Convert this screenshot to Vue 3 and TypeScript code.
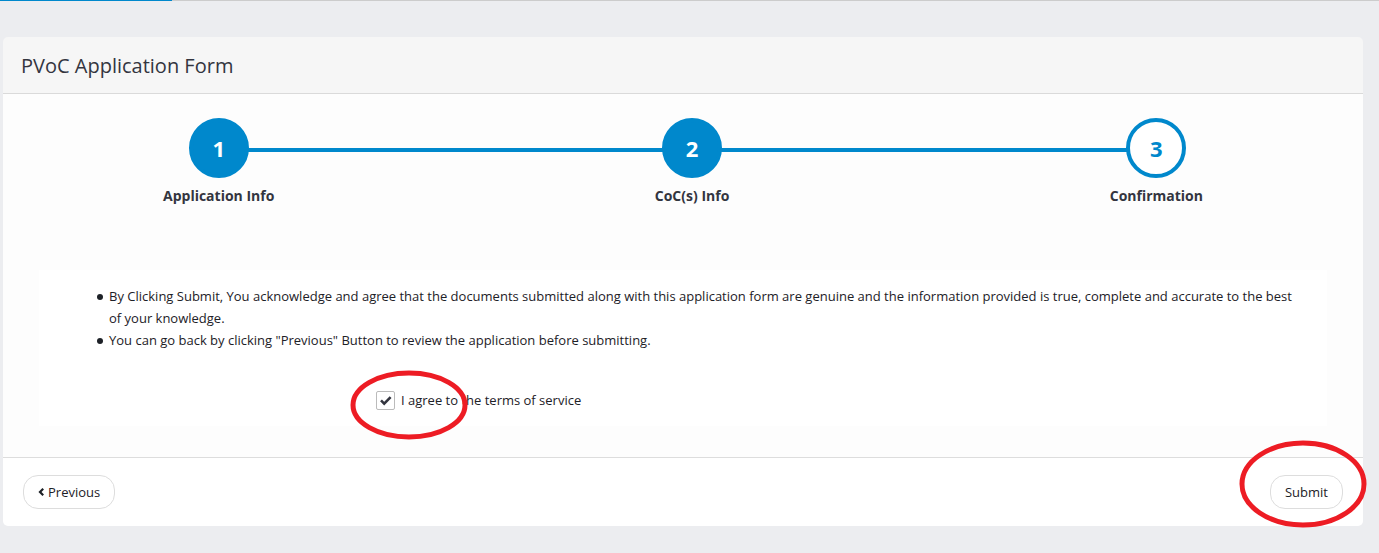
<script setup lang="ts">
import { ref } from 'vue'

interface Step {
  id: number
  label: string
  done: boolean
}

const steps: Step[] = [
  { id: 1, label: 'Application Info', done: true },
  { id: 2, label: 'CoC(s) Info', done: true },
  { id: 3, label: 'Confirmation', done: false },
]

const terms: string[] = [
  'By Clicking Submit, You acknowledge and agree that the documents submitted along with this application form are genuine and the information provided is true, complete and accurate to the best of your knowledge.',
  'You can go back by clicking "Previous" Button to review the application before submitting.',
]

const agreed = ref(true)
</script>

<template>
  <main class="page">
    <div class="rule"></div>
    <form class="panel" @submit.prevent>
      <header class="panel-header">
        <h2>PVoC Application Form</h2>
      </header>

      <div class="panel-body">
        <ol class="steps">
          <li v-for="step in steps" :key="step.id" class="step" :class="{ done: step.done }">
            <span class="circle">{{ step.id }}</span>
            <span class="label">{{ step.label }}</span>
          </li>
        </ol>

        <section class="confirm">
          <ul class="terms">
            <li v-for="term in terms" :key="term">{{ term }}</li>
          </ul>
          <div class="agree">
            <input id="agree" v-model="agreed" type="checkbox" />
            <label for="agree">I agree to the terms of service</label>
            <svg class="ring ring-agree" viewBox="0 0 118 70" aria-hidden="true">
              <ellipse cx="59" cy="35" rx="56" ry="32" />
            </svg>
          </div>
        </section>
      </div>

      <footer class="panel-footer">
        <button type="button" class="pill">
          <svg class="chevron" viewBox="0 0 6 8" aria-hidden="true">
            <path d="M5.2 0.8 2 4l3.2 3.2" />
          </svg>
          Previous
        </button>
        <div class="submit">
          <button type="submit" class="pill">Submit</button>
          <svg class="ring ring-submit" viewBox="0 0 128 88" aria-hidden="true">
            <ellipse cx="64" cy="44" rx="61" ry="41" />
          </svg>
        </div>
      </footer>
    </form>
  </main>
</template>

<style>
body {
  margin: 0;
  background: #ecedf0;
}
</style>

<style scoped>
.page {
  font-family: "Open Sans", "Noto Sans", sans-serif;
  font-size: 13px;
  line-height: 22px;
  color: #1d2127;
}

.rule {
  height: 1px;
  background: linear-gradient(#0088cc, #0088cc) 0 0 / 172px 1px no-repeat #cccccc;
}

.panel {
  margin: 36px 16px 26px 3px;
}

.panel-header {
  padding: 19px 18px 17px;
  background: #f6f6f6;
  border-bottom: 1px solid #dadada;
  border-radius: 5px 5px 0 0;
}

.panel-header h2 {
  margin: 0;
  font-size: 20px;
  line-height: 20px;
  font-weight: 400;
  color: #33353f;
}

.panel-body {
  padding: 24px 36px 31px;
  background: #fdfdfd;
}

.steps {
  position: relative;
  display: flex;
  justify-content: space-between;
  margin: 0 124px;
  padding: 0;
  list-style: none;
}

.steps::before {
  content: "";
  position: absolute;
  top: 30px;
  left: 56px;
  right: 48px;
  height: 4px;
  background: #0088cc;
}

.step {
  position: relative;
  display: flex;
  flex-direction: column;
  align-items: center;
  gap: 7px;
}

.circle {
  box-sizing: border-box;
  width: 60px;
  height: 60px;
  border: 4px solid #0088cc;
  border-radius: 50%;
  background: #ffffff;
  color: #0088cc;
  font-size: 22px;
  line-height: 53px;
  font-weight: 700;
  text-align: center;
}

.done .circle {
  background: #0088cc;
  color: #ffffff;
}

.label {
  font-size: 14px;
  font-weight: 700;
  color: #33353f;
}

.confirm {
  margin-top: 63px;
  padding: 15px 30px 15px;
  background: #ffffff;
}

.terms {
  margin: 0;
  padding: 0 0 0 28px;
  list-style: none;
}

.terms li {
  display: flex;
  gap: 6px;
}

.terms li::before {
  content: "";
  flex: none;
  width: 6px;
  height: 6px;
  margin-top: 9px;
  border-radius: 50%;
  background: #1d2127;
}

.agree {
  position: relative;
  display: flex;
  align-items: center;
  gap: 6px;
  width: max-content;
  margin: 38px 0 0 25%;
}

.agree input {
  appearance: none;
  box-sizing: border-box;
  width: 19px;
  height: 19px;
  margin: 0;
  border: 1px solid #bbbbbb;
  border-radius: 2px;
  background: #ffffff;
}

.agree input:checked {
  background: #ffffff url("data:image/svg+xml,%3Csvg xmlns='http://www.w3.org/2000/svg' viewBox='0 0 17 17'%3E%3Cpath d='M4 8.4 7.2 11.6 13.6 5.2' fill='none' stroke='%2333353f' stroke-width='2.6'/%3E%3C/svg%3E") center / 17px 17px no-repeat;
}

.panel-footer {
  display: flex;
  justify-content: space-between;
  padding: 17px 20px;
  background: #ffffff;
  border-top: 1px solid #dddddd;
  border-radius: 0 0 5px 5px;
}

.pill {
  display: flex;
  align-items: center;
  gap: 4px;
  height: 34px;
  padding: 0 14px;
  border: 1px solid #dddddd;
  border-radius: 15px;
  background: #ffffff;
  color: #1d2127;
  font: inherit;
}

.chevron {
  width: 6px;
  height: 8px;
  fill: none;
  stroke: #1d2127;
  stroke-width: 2.2;
}

.submit {
  position: relative;
}

.ring {
  position: absolute;
  fill: none;
  stroke: #ed1c24;
  stroke-width: 5;
  pointer-events: none;
}

.ring-agree {
  top: -19px;
  left: -26px;
  width: 118px;
  height: 70px;
}

.ring-submit {
  top: -35px;
  left: -31px;
  width: 128px;
  height: 88px;
}
</style>
